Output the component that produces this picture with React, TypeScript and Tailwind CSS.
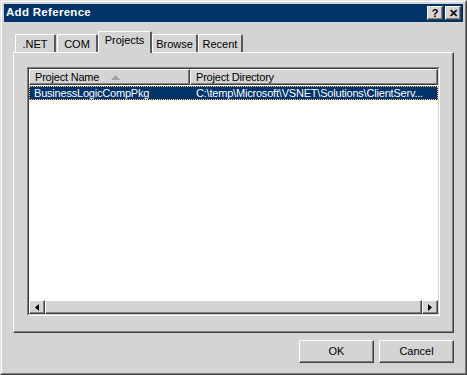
import React from 'react';

// Win2000 style 3D edges
const raised =
  'border border-t-white border-l-white border-r-[#404040] border-b-[#404040] shadow-[inset_-1px_-1px_0_#808080]';
const dither =
  'bg-[repeating-conic-gradient(#dadada_0_25%,#cecece_0_50%)] bg-[length:2px_2px]';

const tabs = ['.NET', 'COM', 'Projects', 'Browse', 'Recent'];
const tabBox: Record<string, string> = {
  '.NET': 'w-[41px]',
  COM: 'w-[41px] ml-[1px]',
  Projects: 'w-[54px]',
  Browse: 'w-[46px]',
  Recent: 'w-[45px]',
};

const TitleButton: React.FC<{ label: string }> = ({ label }) => (
  <div
    className={`w-[16px] h-[14px] ${raised} ${dither} flex items-center justify-center text-[11px] font-bold leading-none text-black`}
  >
    {label}
  </div>
);

const Tab: React.FC<{ label: string; active: boolean }> = ({ label, active }) => (
  <div
    className={`${tabBox[label]} ${
      active ? `h-[22px] -mb-[1px] z-10 relative ${dither} pb-[4px]` : 'h-[18px] pt-[1px]'
    } border-l border-t border-white border-r-2 border-r-[#5a5a5a] rounded-t-[2px] flex items-center justify-center`}
  >
    {label}
  </div>
);

const DialogButton: React.FC<{ label: string }> = ({ label }) => (
  <div className={`w-[75px] h-[23px] ${raised} flex items-center justify-center`}>
    {label}
  </div>
);

export default function App() {
  return (
    <div
      className={`w-[467px] h-[375px] ${dither} font-['Liberation_Sans',Arial,sans-serif] text-[11px] text-black border border-t-[#e4e4e4] border-l-[#e4e4e4] border-r-[#404040] border-b-[#404040] flex flex-col select-none`}
    >
      <div className="flex-1 border border-t-white border-l-white border-r-[#808080] border-b-[#808080] px-[2px] pt-[2px] flex flex-col">
        {/* title bar */}
        <div className="h-[18px] bg-[#00336a] flex items-center justify-between pl-[2px] pr-[2px]">
          <span className="text-white font-bold text-[11.5px] tracking-[0.3px]">Add Reference</span>
          <div className="flex gap-[2px]">
            <TitleButton label="?" />
            <TitleButton label="✕" />
          </div>
        </div>

        {/* tabs */}
        <div className="ml-[11px] mt-[11px] flex items-end h-[19px]">
          {tabs.map((t) => (
            <Tab key={t} label={t} active={t === 'Projects'} />
          ))}
        </div>

        {/* tab page */}
        <div className="ml-[9px] w-[441px] h-[281px] border border-t-white border-l-white border-r-[#404040] border-b-[#404040] shadow-[inset_-1px_-1px_0_#808080] pl-[13px] pt-[14px]">
          <div className="w-[413px] h-[249px] border border-t-[#808080] border-l-[#808080] border-r-white border-b-white">
            <div className="w-full h-full border border-t-[#404040] border-l-[#404040] border-r-[#d6d6d6] border-b-[#d6d6d6] bg-white flex flex-col tracking-[-0.2px]">
              {/* header */}
              <div className="flex h-[16px]">
                <div className={`w-[161px] ${raised} ${dither} flex items-center pl-[5px]`}>
                  <span>Project Name</span>
                  <svg width="9" height="5" viewBox="0 0 9 5" className="ml-[12px]">
                    <polygon points="4.5,0 9,5 0,5" fill="#a0a0a0" />
                  </svg>
                </div>
                <div className={`flex-1 ${raised} ${dither} flex items-center pl-[5px]`}>
                  Project Directory
                </div>
              </div>
              {/* selected row */}
              <div className="h-[14px] mt-[1px] bg-[#00336a] text-white flex items-center outline-1 outline-dotted outline-[#ffcc66] -outline-offset-1">
                <div className="w-[161px] pl-[5px] whitespace-nowrap">BusinessLogicCompPkg</div>
                <div className="pl-[6px] whitespace-nowrap">C:\temp\Microsoft\VSNET\Solutions\ClientServ...</div>
              </div>
              <div className="flex-1" />
              {/* horizontal scrollbar */}
              <div className="h-[14px] flex">
                <div className={`w-[16px] ${raised} ${dither} flex items-center justify-center`}>
                  <svg width="4" height="7" viewBox="0 0 4 7">
                    <polygon points="4,0 4,7 0,3.5" fill="#000" />
                  </svg>
                </div>
                <div className={`flex-1 ${raised} ${dither}`} />
                <div className={`w-[16px] ${raised} ${dither} flex items-center justify-center`}>
                  <svg width="4" height="7" viewBox="0 0 4 7">
                    <polygon points="0,0 0,7 4,3.5" fill="#000" />
                  </svg>
                </div>
              </div>
            </div>
          </div>
        </div>

        {/* buttons */}
        <div className="flex justify-end gap-[5px] mt-[7px] mr-[9px]">
          <DialogButton label="OK" />
          <DialogButton label="Cancel" />
        </div>
      </div>
    </div>
  );
}
